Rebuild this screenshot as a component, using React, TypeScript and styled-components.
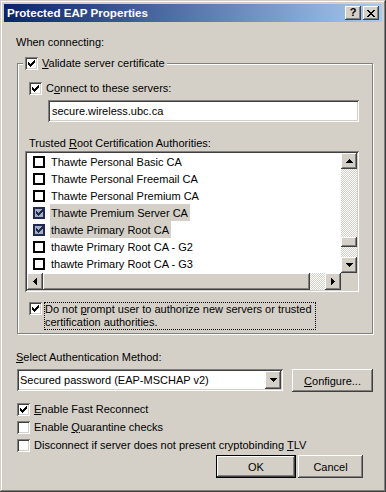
import React from 'react';
import styled, { createGlobalStyle } from 'styled-components';

const GlobalStyle = createGlobalStyle`
  html, body {
    margin: 0;
    padding: 0;
    background: #d4d0c8;
  }
  body {
    font-family: "Liberation Sans", Arial, sans-serif;
    font-size: 11px;
    color: #000;
  }
  * {
    box-sizing: border-box;
  }
`;

// classic 3d edges
const raised = 'box-shadow: inset -1px -1px #404040, inset 1px 1px #fff, inset -2px -2px #808080, inset 2px 2px #d4d0c8;';
const sunken = 'box-shadow: inset 1px 1px #808080, inset -1px -1px #fff, inset 2px 2px #404040, inset -2px -2px #d4d0c8;';
const checker = 'background: repeating-conic-gradient(#d4d0c8 0 25%, #fff 0 50%) 0 0 / 2px 2px;';

const certs = [
  { name: 'Thawte Personal Basic CA', checked: false },
  { name: 'Thawte Personal Freemail CA', checked: false },
  { name: 'Thawte Personal Premium CA', checked: false },
  { name: 'Thawte Premium Server CA', checked: true },
  { name: 'thawte Primary Root CA', checked: true },
  { name: 'thawte Primary Root CA - G2', checked: false },
  { name: 'thawte Primary Root CA - G3', checked: false }
];

// 7x7 pixel check mark
const CheckMark = ({ color = '#000' }: { color?: string }) => {
  const tops = [2, 3, 4, 3, 2, 1, 0];
  return (
    <svg width="7" height="7" viewBox="0 0 7 7" shapeRendering="crispEdges">
      {tops.map((t, i) => (
        <rect key={i} x={i} y={t} width={1} height={3} fill={color} />
      ))}
    </svg>
  );
};

const Arrow = ({ dir }: { dir: 'up' | 'down' | 'left' | 'right' }) => {
  const steps = [0, 1, 2, 3];
  if (dir === 'up' || dir === 'down') {
    return (
      <svg width="7" height="4" viewBox="0 0 7 4" shapeRendering="crispEdges">
        {steps.map((i) => {
          const w = dir === 'up' ? 2 * i + 1 : 7 - 2 * i;
          return <rect key={i} x={(7 - w) / 2} y={i} width={w} height={1} fill="#000" />;
        })}
      </svg>
    );
  }
  return (
    <svg width="4" height="7" viewBox="0 0 4 7" shapeRendering="crispEdges">
      {steps.map((i) => {
        const h = dir === 'left' ? 2 * i + 1 : 7 - 2 * i;
        return <rect key={i} x={i} y={(7 - h) / 2} width={1} height={h} fill="#000" />;
      })}
    </svg>
  );
};

const CloseGlyph = () => {
  const rows = [
    [0, 6],
    [1, 5],
    [2, 4],
    [3, 3],
    [2, 4],
    [1, 5],
    [0, 6]
  ];
  return (
    <svg width="8" height="7" viewBox="0 0 8 7" shapeRendering="crispEdges">
      {rows.map(([a, b], r) => (
        <React.Fragment key={r}>
          <rect x={a} y={r} width={2} height={1} fill="#000" />
          <rect x={b} y={r} width={2} height={1} fill="#000" />
        </React.Fragment>
      ))}
    </svg>
  );
};

const CheckBox = ({ checked }: { checked?: boolean }) => (
  <S.Box>{checked && <CheckMark />}</S.Box>
);

const App = () => {
  return (
    <>
      <GlobalStyle />
      <S.Window>
        <S.TitleBar>
          <S.Title>Protected EAP Properties</S.Title>
          <S.TitleButtons>
            <S.TitleButton>
              <S.Help>?</S.Help>
            </S.TitleButton>
            <S.TitleButton>
              <CloseGlyph />
            </S.TitleButton>
          </S.TitleButtons>
        </S.TitleBar>

        <S.Body>
          <S.Label>When connecting:</S.Label>

          <S.Group>
            <S.Legend>
              <CheckBox checked />
              <span>
                <u>V</u>alidate server certificate
              </span>
            </S.Legend>

            <S.CheckRow $mt={12}>
              <CheckBox checked />
              <span>
                C<u>o</u>nnect to these servers:
              </span>
            </S.CheckRow>
            <S.Field>secure.wireless.ubc.ca</S.Field>

            <S.Label $mt={15}>
              Trusted <u>R</u>oot Certification Authorities:
            </S.Label>

            <S.ListBox>
              <S.ListRows>
                {certs.map((c) => (
                  <S.ListRow key={c.name}>
                    <S.ListCheck $checked={c.checked}>{c.checked && <CheckMark color="#1f2a50" />}</S.ListCheck>
                    <S.ListText $selected={c.checked}>{c.name}</S.ListText>
                  </S.ListRow>
                ))}
              </S.ListRows>
              <S.VScroll>
                <S.ScrollButton>
                  <Arrow dir="up" />
                </S.ScrollButton>
                <S.VTrack $offset={68}>
                  <S.VThumb />
                </S.VTrack>
                <S.ScrollButton>
                  <Arrow dir="down" />
                </S.ScrollButton>
              </S.VScroll>
              <S.HScroll>
                <S.ScrollButton>
                  <Arrow dir="left" />
                </S.ScrollButton>
                <S.HTrack>
                  <S.HThumb style={{ width: 267 }} />
                </S.HTrack>
                <S.ScrollButton>
                  <Arrow dir="right" />
                </S.ScrollButton>
              </S.HScroll>
              <S.Corner />
            </S.ListBox>

            <S.PromptRow>
              <CheckBox checked />
              <S.FocusLabel>
                Do not <u>p</u>rompt user to authorize new servers or trusted
                <br />
                certification authorities.
              </S.FocusLabel>
            </S.PromptRow>
          </S.Group>

          <S.Label $mt={17}>
            <u>S</u>elect Authentication Method:
          </S.Label>

          <S.ComboRow>
            <S.Combo>
              <S.ComboText>Secured password (EAP-MSCHAP v2)</S.ComboText>
              <S.ComboButton>
                <Arrow dir="down" />
              </S.ComboButton>
            </S.Combo>
            <S.Button $width={81}>
              <u>C</u>onfigure...
            </S.Button>
          </S.ComboRow>

          <S.Options>
            <S.CheckRow>
              <CheckBox checked />
              <span>
                <u>E</u>nable Fast Reconnect
              </span>
            </S.CheckRow>
            <S.CheckRow>
              <CheckBox />
              <span>
                Enable <u>Q</u>uarantine checks
              </span>
            </S.CheckRow>
            <S.CheckRow>
              <CheckBox />
              <span>
                Disconnect if server does not present cryptobinding <u>T</u>LV
              </span>
            </S.CheckRow>
          </S.Options>

          <S.ButtonRow>
            <S.Button $width={80} $default>
              OK
            </S.Button>
            <S.Button $width={65}>Cancel</S.Button>
          </S.ButtonRow>
        </S.Body>
      </S.Window>
    </>
  );
};

export default App;

const S = {
  Window: styled.div`
    width: 386px;
    height: 492px;
    padding: 4px;
    background: #d4d0c8;
    box-shadow: inset -1px -1px #404040, inset 1px 1px #d4d0c8, inset -2px -2px #808080, inset 2px 2px #fff;
    display: flex;
    flex-direction: column;
  `,
  TitleBar: styled.div`
    height: 18px;
    flex: none;
    display: flex;
    align-items: center;
    padding: 0 3px 0 3px;
    background: linear-gradient(to right, #0a246a, #a6caf0);
  `,
  Title: styled.div`
    flex: 1;
    color: #fff;
    font-weight: bold;
    font-size: 11.6px;
    line-height: 18px;
    white-space: nowrap;
  `,
  TitleButtons: styled.div`
    display: flex;
    gap: 2px;
  `,
  TitleButton: styled.div`
    width: 16px;
    height: 14px;
    background: #d4d0c8;
    ${raised}
    display: flex;
    align-items: center;
    justify-content: center;
  `,
  Help: styled.span`
    font-weight: bold;
    font-size: 11px;
    line-height: 11px;
    margin-top: -1px;
  `,
  Body: styled.div`
    flex: 1;
    display: flex;
    flex-direction: column;
    align-items: flex-start;
    padding: 14px 9px 0 12px;
  `,
  Label: styled.div<{ $mt?: number }>`
    line-height: 13px;
    white-space: nowrap;
    margin-top: ${(p) => p.$mt ?? 0}px;
  `,
  Group: styled.div`
    width: 356px;
    margin: 14px 0 0 1px;
    padding: 0 12px 3px 11px;
    border: 1px solid #808080;
    box-shadow: inset 1px 1px #fff, 1px 1px #fff;
    display: flex;
    flex-direction: column;
    align-items: flex-start;
  `,
  Legend: styled.div`
    margin: -7px 0 0 -6px;
    padding: 0 2px;
    background: #d4d0c8;
    display: flex;
    align-items: center;
    gap: 4px;
    line-height: 13px;
    white-space: nowrap;
  `,
  Box: styled.span`
    width: 13px;
    height: 13px;
    flex: none;
    background: #fff;
    ${sunken}
    display: flex;
    align-items: center;
    justify-content: center;
  `,
  CheckRow: styled.div<{ $mt?: number }>`
    display: flex;
    align-items: center;
    gap: 4px;
    line-height: 13px;
    white-space: nowrap;
    margin-top: ${(p) => p.$mt ?? 0}px;
  `,
  Field: styled.div`
    width: 311px;
    height: 22px;
    margin: 5px 0 0 19px;
    padding: 0 4px;
    background: #fff;
    ${sunken}
    display: flex;
    align-items: center;
  `,
  ListBox: styled.div`
    width: 334px;
    height: 141px;
    margin: 1px 0 0 -4px;
    padding: 2px;
    background: #fff;
    ${sunken}
    display: grid;
    grid-template-columns: 1fr 16px;
    grid-template-rows: 1fr 17px;
  `,
  ListRows: styled.div`
    overflow: hidden;
    display: flex;
    flex-direction: column;
  `,
  ListRow: styled.div`
    height: 17px;
    flex: none;
    display: flex;
    align-items: stretch;
    padding-left: 6px;
    white-space: nowrap;
  `,
  ListCheck: styled.span<{ $checked?: boolean }>`
    width: 12px;
    height: 12px;
    align-self: center;
    flex: none;
    border: 2px solid ${(p) => (p.$checked ? '#1f2a50' : '#000')};
    background: ${(p) => (p.$checked ? '#a8aec4' : '#fff')};
    display: flex;
    align-items: center;
    justify-content: center;
    margin-right: 5px;
  `,
  ListText: styled.span<{ $selected?: boolean }>`
    display: flex;
    align-items: center;
    padding: 0 2px 0 1px;
    background: ${(p) => (p.$selected ? '#d4d0c8' : 'transparent')};
  `,
  VScroll: styled.div`
    display: grid;
    grid-template-rows: 16px 1fr 16px;
  `,
  ScrollButton: styled.div`
    background: #d4d0c8;
    ${raised}
    display: flex;
    align-items: center;
    justify-content: center;
  `,
  VTrack: styled.div<{ $offset: number }>`
    ${checker}
    padding-top: ${(p) => p.$offset}px;
  `,
  VThumb: styled.div`
    height: 10px;
    background: #d4d0c8;
    ${raised}
  `,
  HScroll: styled.div`
    display: grid;
    grid-template-columns: 16px 1fr 16px;
  `,
  HTrack: styled.div`
    ${checker}
    display: flex;
  `,
  HThumb: styled.div`
    height: 100%;
    background: #d4d0c8;
    ${raised}
  `,
  Corner: styled.div`
    background: #d4d0c8;
  `,
  PromptRow: styled.div`
    display: flex;
    align-items: flex-start;
    gap: 2px;
    margin-top: 10px;
  `,
  FocusLabel: styled.div`
    border: 1px dotted #000;
    padding: 0 3px 0 0;
    line-height: 13px;
    white-space: nowrap;
  `,
  ComboRow: styled.div`
    display: flex;
    align-items: flex-start;
    gap: 9px;
    margin: 5px 0 0 1px;
  `,
  Combo: styled.div`
    width: 266px;
    height: 22px;
    padding: 2px;
    background: #fff;
    ${sunken}
    display: flex;
    align-items: stretch;
  `,
  ComboText: styled.div`
    flex: 1;
    display: flex;
    align-items: center;
    padding-left: 1px;
    white-space: nowrap;
  `,
  ComboButton: styled.div`
    width: 16px;
    background: #d4d0c8;
    ${raised}
    display: flex;
    align-items: center;
    justify-content: center;
  `,
  Button: styled.div<{ $width: number; $default?: boolean }>`
    width: ${(p) => p.$width}px;
    height: 23px;
    background: #d4d0c8;
    ${(p) =>
      p.$default
        ? 'box-shadow: inset 0 0 0 1px #000, inset -2px -2px #404040, inset 2px 2px #fff, inset -3px -3px #808080;'
        : raised}
    display: flex;
    align-items: center;
    justify-content: center;
    white-space: nowrap;
  `,
  Options: styled.div`
    display: flex;
    flex-direction: column;
    gap: 5px;
    margin: 11px 0 0 1px;
  `,
  ButtonRow: styled.div`
    align-self: stretch;
    display: flex;
    justify-content: flex-end;
    gap: 2px;
    margin-top: 3px;
    padding-right: 10px;
  `
};
